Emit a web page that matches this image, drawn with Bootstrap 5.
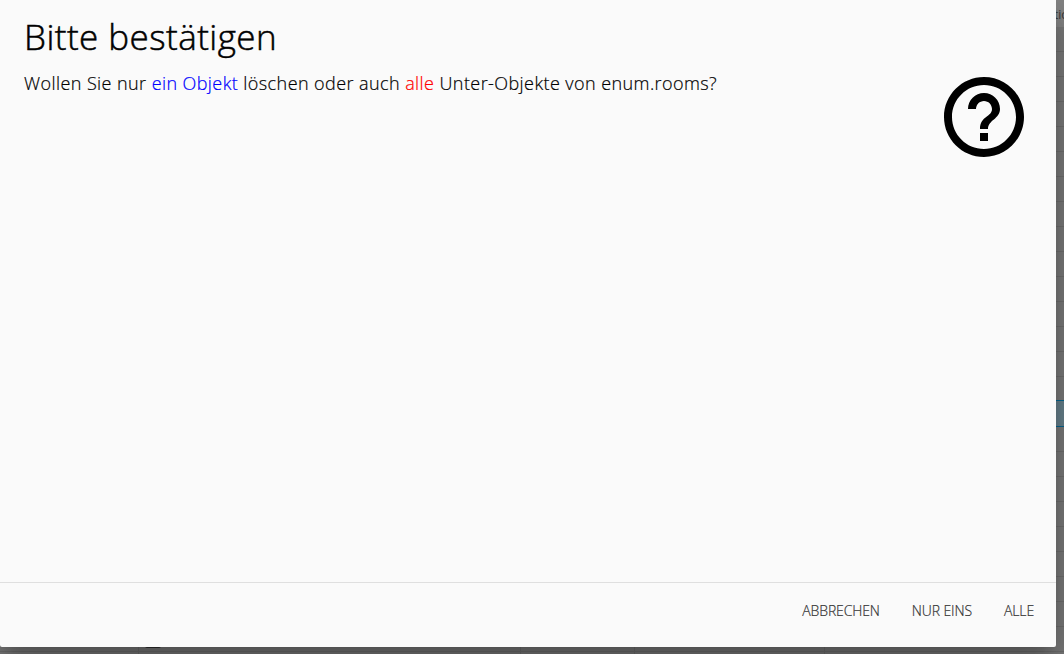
<!DOCTYPE html>
<html lang="de">
<head>
  <meta charset="UTF-8">
  <title>Bitte bestätigen</title>
  <link href="https://cdn.jsdelivr.net/npm/bootstrap@5.3.0/dist/css/bootstrap.min.css" rel="stylesheet">
  <style>
    body {
      background-color: #7a7a7a;
      font-family: 'Open Sans', 'Noto Sans', sans-serif;
      height: 654px;
    }

    .tree-head {
      height: 27px;
      line-height: 29px;
      background-color: #858585;
      color: #383838;
      font-size: 12px;
    }

    .tree-head span {
      width: 10px;
      white-space: nowrap;
    }

    .tree-row {
      height: 25px;
      border-bottom: 1px solid #6e6e6e;
    }

    .tree-row.before-selected,
    .tree-row.selected {
      border-color: #066690;
    }

    .tree-row.before-selected {
      height: 24px;
    }

    .tree-row.selected {
      height: 26px;
      background-color: #67808c;
    }

    .tree-row div {
      border-right: 1px solid #6e6e6e;
    }

    .col-id { width: 139px; }
    .col-name { width: 382px; }
    .col-type { width: 114px; }
    .col-role { width: 190px; }

    .tree-icon {
      left: 145px;
      top: 640px;
      width: 16px;
      height: 8px;
      border-radius: 2px;
      background-color: #303030;
    }

    .dialog {
      width: 1056px;
      height: 647px;
      background-color: #fafafa;
      border-radius: 0 0 2px 2px;
      box-shadow: 0 24px 38px 3px rgba(0, 0, 0, .14), 0 9px 46px 8px rgba(0, 0, 0, .12), 0 11px 15px -7px rgba(0, 0, 0, .2);
    }

    .dialog-body {
      padding: 15px 24px 16px;
      color: #000;
    }

    .dialog-title {
      font-size: 35px;
      font-weight: 300;
      line-height: 44px;
      letter-spacing: .45px;
      -webkit-text-stroke: .5px #000;
    }

    .dialog-text {
      font-size: 18px;
      font-weight: 300;
      line-height: 27px;
      letter-spacing: .42px;
      padding-top: 11px;
      -webkit-text-stroke: .2px;
    }

    .one { color: #00f; }
    .all { color: #f00; }

    .help-icon {
      width: 96px;
      height: 96px;
      margin: 10px 0 0;
    }

    .dialog-footer {
      height: 65px;
      padding: 0 6px 9px;
      border-top: 1px solid #dfdfdf;
    }

    .btn-flat {
      padding: 0 16px;
      border: 0;
      border-radius: 2px;
      color: #343434;
      font-size: 14px;
      font-weight: 300;
      line-height: 36px;
      letter-spacing: -.12px;
      -webkit-text-stroke: .2px;
    }
  </style>
</head>
<body class="position-relative overflow-hidden">

<!-- Object list -->
<div id="tree">
  <div class="tree-head d-flex justify-content-end"><span>tio</span></div>
</div>
<div class="tree-icon position-absolute"></div>

<!-- Confirm dialog -->
<div class="dialog position-absolute top-0 start-0 d-flex flex-column">
  <div class="dialog-body flex-grow-1 d-flex flex-column">
    <h4 class="dialog-title m-0">Bitte bestätigen</h4>
    <div class="d-flex justify-content-between">
      <div class="dialog-text">Wollen Sie nur <span class="one">ein Objekt</span> löschen oder auch <span class="all">alle</span> Unter-Objekte von enum.rooms?</div>
      <svg class="help-icon" viewBox="0 0 24 24">
        <path d="M11 18h2v-2h-2v2zm1-16C6.480 2 2 6.480 2 12s4.480 10 10 10 10-4.480 10-10S17.520 2 12 2zm0 18c-4.410 0-8-3.590-8-8s3.590-8 8-8 8 3.590 8 8-3.590 8-8 8zm0-14c-2.210 0-4 1.790-4 4h2c0-1.100.9-2 2-2s2 .9 2 2c0 2-3 1.750-3 5h2c0-2.250 3-2.500 3-5 0-2.210-1.790-4-4-4z"/>
      </svg>
    </div>
  </div>
  <div class="dialog-footer d-flex justify-content-end align-items-center">
    <button type="button" class="btn btn-flat">ABBRECHEN</button>
    <button type="button" class="btn btn-flat">NUR EINS</button>
    <button type="button" class="btn btn-flat">ALLE</button>
  </div>
</div>

<script src="https://cdn.jsdelivr.net/npm/bootstrap@5.3.0/dist/js/bootstrap.bundle.min.js"></script>
<script>
  const tree = document.getElementById('tree');
  const selectedRow = 15;

  for (let i = 0; i < 26; i++) {
    const row = document.createElement('div');
    row.className = 'tree-row d-flex';
    if (i === selectedRow - 1) row.classList.add('before-selected');
    if (i === selectedRow) row.classList.add('selected');
    row.innerHTML = '<div class="col-id"></div><div class="col-name"></div><div class="col-type"></div><div class="col-role"></div>';
    tree.appendChild(row);
  }
</script>

</body>
</html>
